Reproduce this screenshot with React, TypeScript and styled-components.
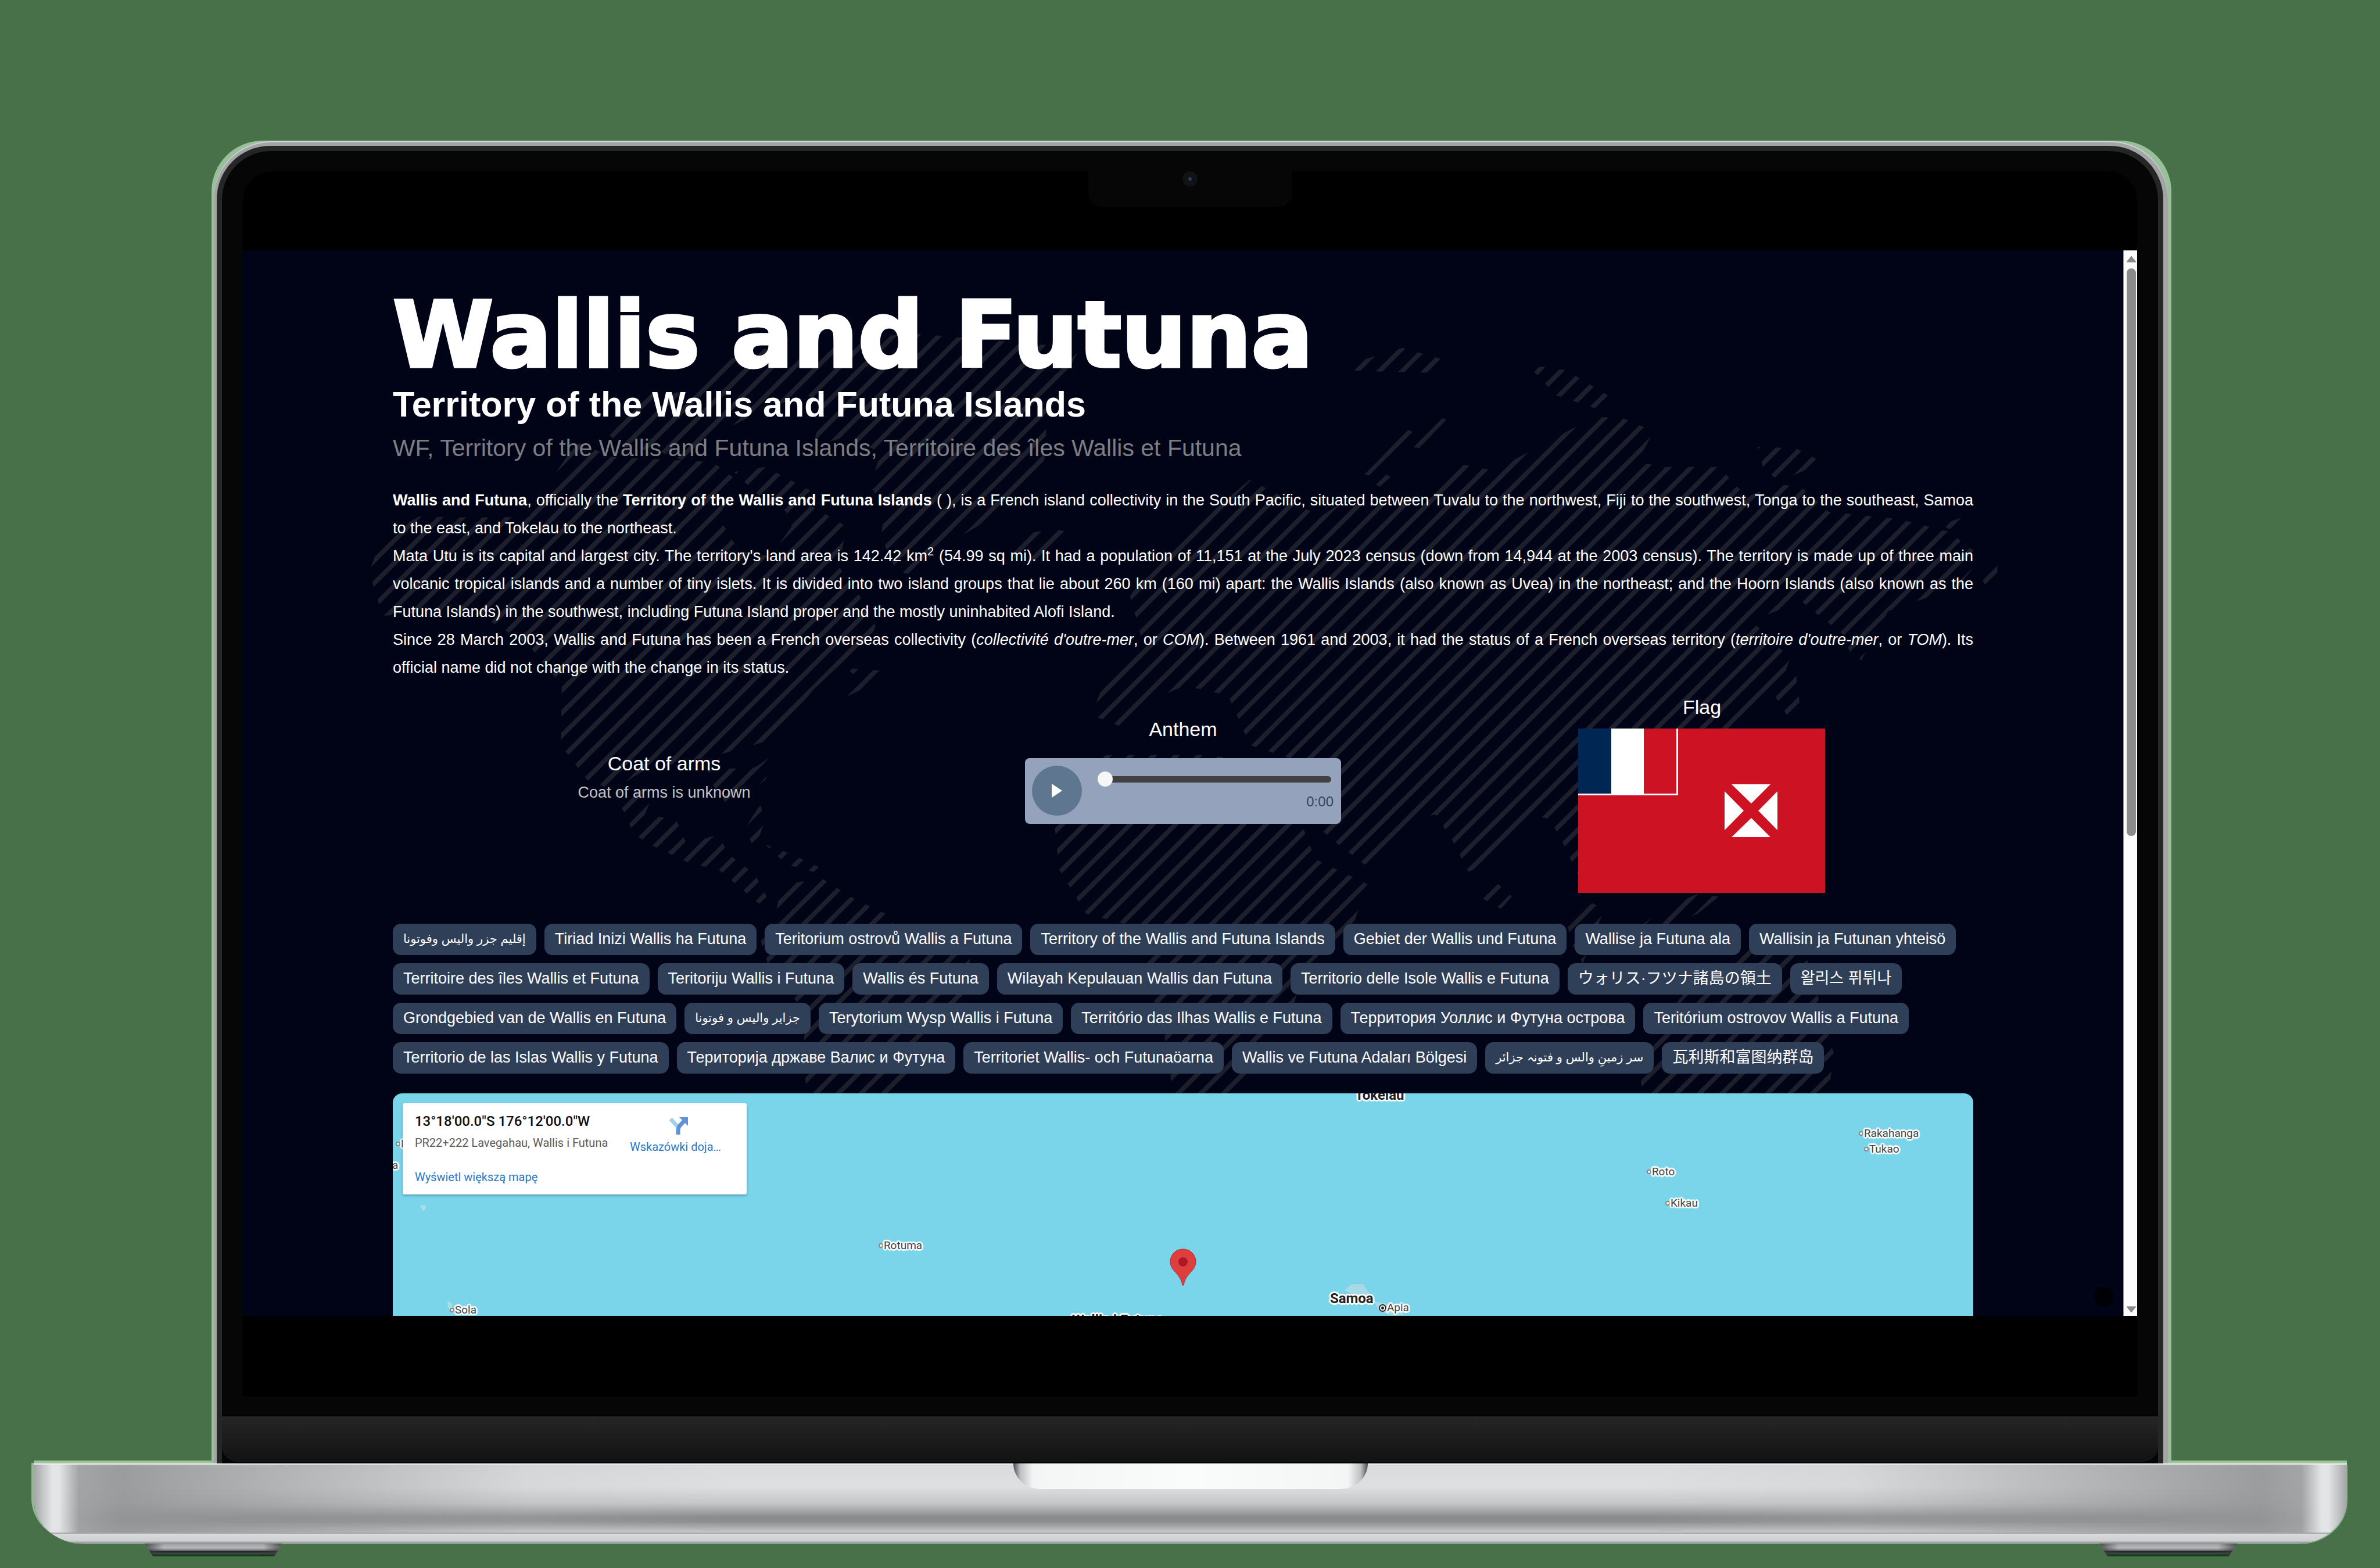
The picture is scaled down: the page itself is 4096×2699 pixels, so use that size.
import React from "react";
import styled, { createGlobalStyle, css } from "styled-components";

const sans = `"Liberation Sans", Arial, "DejaVu Sans", "Noto Sans CJK JP", "Noto Sans CJK KR", sans-serif`;
const mapFont = `Roboto, "Noto Sans", sans-serif`;

const GlobalStyle = createGlobalStyle`
  *, *::before, *::after { box-sizing: border-box; }
  html, body { margin: 0; padding: 0; background: #48714a; }
  h1, h2, h3, p, ul { margin: 0; padding: 0; }
  button { border: 0; padding: 0; background: none; cursor: pointer; }
`;

/* ---------- laptop ---------- */

const Stage = styled.div`
  height: 100vh;
  display: flex;
  flex-direction: column;
  padding: 242px 0 20px;
  overflow: hidden;
  background: #48714a;
`;

const LidEdge = styled.div`
  flex: 1;
  min-height: 0;
  display: flex;
  position: relative;
  z-index: 1;
  margin: 0 359px 0 364px;
  padding: 1px 6px 0 4px;
  background: #98c09a;
  border-radius: 88px 88px 0 0;
`;

const LidMetal = styled.div`
  flex: 1;
  display: flex;
  padding: 8px 8px 0 5px;
  border-radius: 98px 98px 0 0;
  background: #a3a4a6;
  box-shadow: inset 0 2px 0 #d2d3d5;
`;

const LidRim = styled.div`
  flex: 1;
  display: flex;
  padding: 9px 9px 0;
  border-radius: 92px 92px 0 0;
  background: #252626;
`;

const Bezel = styled.div`
  flex: 1;
  min-width: 0;
  display: flex;
  flex-direction: column;
  background: #060606;
  border-radius: 84px 84px 0 0;
`;

const Screen = styled.div`
  flex: 1;
  min-height: 0;
  display: flex;
  flex-direction: column;
  margin: 35px 36px 34px;
  background: #000;
  border-radius: 50px 50px 0 0;
`;

const TopBar = styled.div`
  height: 136px;
  display: flex;
  justify-content: center;
  align-items: flex-start;
`;

const Notch = styled.div`
  width: 351px;
  height: 61px;
  display: flex;
  justify-content: center;
  background: #060606;
  border-radius: 0 0 24px 24px;
`;

const Camera = styled.div`
  width: 26px;
  height: 26px;
  border-radius: 50%;
  background: radial-gradient(circle, #2c3f6e 0 2px, #111213 4px 100%);
`;

const BottomBar = styled.div`
  height: 139px;
`;

const Hinge = styled.div`
  height: 81px;
  border-radius: 0 0 28px 28px;
  background: linear-gradient(#262626, #1c1c1c 50%, #121212);
  border-bottom: 2px solid #000;
`;

const Base = styled.div`
  height: 138px;
  margin: 0 57px 0 58px;
  display: flex;
  justify-content: center;
  align-items: flex-start;
  border-radius: 0 0 84px 84px / 0 0 76px 76px;
  box-shadow: 0 -5px 0 #9cc49e, -5px -2px 0 -1px #8fba91, 2px 2px 0 -1px #8fba91;
  background:
    linear-gradient(#f1f1f2 0 2px, transparent 2px 119px, #a6a7a8 119px 121px, #d9dadc 121px, #cfd0d2 133px, #949596 137px),
    linear-gradient(90deg, #a3a4a6 0, #c9cacc 18px, #e3e4e6 32px, #e3e4e6 44px, rgba(160, 161, 163, 0.95) 78px, rgba(148, 149, 151, 0.9) 150px, rgba(150, 151, 153, 0.6) 420px, rgba(190, 191, 193, 0.2) 850px, transparent 1200px, transparent calc(100% - 1200px), rgba(190, 191, 193, 0.2) calc(100% - 850px), rgba(150, 151, 153, 0.6) calc(100% - 420px), rgba(148, 149, 151, 0.9) calc(100% - 150px), rgba(160, 161, 163, 0.95) calc(100% - 78px), #e3e4e6 calc(100% - 44px), #e3e4e6 calc(100% - 32px), #c9cacc calc(100% - 18px), #a3a4a6 100%),
    linear-gradient(#dadbdd 0, #dedfe0 40px, #c6c7c8 68px, #8a8b8d 92px, #8c8d8f 100px, #c8c9cb 119px, #d0d1d3 138px);
`;

const Thumb = styled.div`
  width: 610px;
  height: 44px;
  border-radius: 0 0 46px 46px / 0 0 44px 44px;
  background: linear-gradient(90deg, #4c4d52 0, #bfc0c2 12px, #f4f5f5 34px, #fafbfb 50%, #f4f5f5 calc(100% - 34px), #bfc0c2 calc(100% - 12px), #4c4d52 100%);
`;

const Feet = styled.div`
  height: 22px;
  display: flex;
  justify-content: space-between;
  padding: 0 246px 0 249px;
`;

const Foot = styled.div`
  width: 237px;
  clip-path: polygon(0 0, 100% 0, 94% 100%, 6% 100%);
  background:
    linear-gradient(90deg, rgba(60, 60, 62, 0.8), transparent 14%, transparent 86%, rgba(60, 60, 62, 0.8)),
    linear-gradient(#9b9c9f 0, #b9babd 7px, #77787b 12px, #202124 13px, #4a4b50 18px, #0b3b10 19px, #0b3b10 22px);
`;

/* ---------- browser page ---------- */

const Viewport = styled.div`
  flex: 1;
  min-height: 0;
  display: flex;
  overflow: hidden;
`;

const Page = styled.main`
  flex: 1;
  min-width: 0;
  position: relative;
  overflow: hidden;
  background: #010416;
  color: #fff;
  font-family: ${sans};
  padding-top: 64px;
`;

const WorldPattern = styled.svg`
  position: absolute;
  inset: 0;
  width: 100%;
  height: 100%;
`;

const Content = styled.div`
  position: relative;
  width: 84.06%;
  margin: 0 auto;
`;

const Title = styled.h1`
  font-family: "DejaVu Sans", ${sans};
  font-weight: 700;
  font-size: 157px;
  line-height: 163px;
  -webkit-text-stroke: 5px #fff;
`;

const Subtitle = styled.h2`
  margin-top: 4px;
  font-size: 61px;
  line-height: 68px;
`;

const AltNames = styled.p`
  margin-top: 14px;
  font-size: 41px;
  line-height: 54px;
  color: #7d7e83;
`;

const Article = styled.div`
  margin-top: 39px;
  font-size: 27px;
  line-height: 48px;
  text-align: justify;
  sup { line-height: 0; font-size: 20px; }
`;

const Symbols = styled.section`
  margin-top: 20px;
  display: flex;
  justify-content: center;
  align-items: center;
  gap: 468px;
`;

const Symbol = styled.div<{ $gap: number; $lift?: number }>`
  flex: 0 0 425px;
  display: flex;
  flex-direction: column;
  align-items: center;
  gap: ${(p) => p.$gap}px;
  padding-bottom: ${(p) => p.$lift ?? 0}px;
`;

const SymbolTitle = styled.h3`
  font-size: 34px;
  font-weight: 400;
  line-height: 48px;
`;

const Muted = styled.p`
  font-size: 27px;
  line-height: 48px;
  color: #c3c4c8;
`;

const Player = styled.div`
  width: 544px;
  height: 113px;
  margin: 0 -60px;
  display: flex;
  align-items: center;
  gap: 27px;
  padding: 0 13px 0 12px;
  border-radius: 8px;
  background: #94a3bb;
`;

const PlayButton = styled.button`
  flex: 0 0 86px;
  height: 86px;
  border-radius: 50%;
  background: #5e7690;
  display: flex;
  align-items: center;
  justify-content: center;
`;

const Timeline = styled.div`
  flex: 1;
  min-width: 0;
  display: flex;
  flex-direction: column;
  gap: 12px;
`;

const Seek = styled.input`
  appearance: none;
  width: calc(100% - 4px);
  height: 26px;
  margin: 0;
  background: transparent;
  &::-webkit-slider-runnable-track {
    height: 11px;
    border-radius: 6px;
    background: #434043;
  }
  &::-webkit-slider-thumb {
    appearance: none;
    width: 26px;
    height: 26px;
    margin-top: -8px;
    border-radius: 50%;
    background: #f6f6f6;
  }
`;

const Time = styled.span`
  align-self: flex-end;
  font-size: 24px;
  line-height: 28px;
  color: #38455a;
`;

const Flag = styled.svg`
  display: block;
  width: 425px;
  height: 283px;
`;

const Tags = styled.ul`
  margin-top: 53px;
  display: flex;
  flex-wrap: wrap;
  gap: 14px;
  list-style: none;
`;

const Tag = styled.li<{ $arabic: boolean }>`
  height: 54px;
  padding: 0 18px;
  border-radius: 14px;
  background: #2f3f58;
  font-size: ${(p) => (p.$arabic ? 21 : 27)}px;
  line-height: 52px;
  white-space: nowrap;
`;

/* ---------- map ---------- */

const Map = styled.section`
  position: relative;
  height: 760px;
  margin-top: 34px;
  border-radius: 16px;
  overflow: hidden;
  background: #7ad5ea;
  font-family: ${mapFont};
`;

const halo = css`
  text-shadow: -2px -2px 1px #fff, 2px -2px 1px #fff, -2px 2px 1px #fff, 2px 2px 1px #fff, 0 3px 1px #fff, 0 -3px 1px #fff, 3px 0 1px #fff, -3px 0 1px #fff;
`;

const Place = styled.span<{ $x: number; $y: number; $major?: boolean }>`
  position: absolute;
  left: ${(p) => p.$x}px;
  top: ${(p) => p.$y}px;
  display: flex;
  align-items: center;
  gap: 1px;
  white-space: nowrap;
  color: ${(p) => (p.$major ? "#222" : "#444")};
  font-size: ${(p) => (p.$major ? 24 : 19)}px;
  font-weight: ${(p) => (p.$major ? 700 : 400)};
  line-height: 28px;
  ${halo}
`;

const Dot = styled.i<{ $capital?: boolean }>`
  width: ${(p) => (p.$capital ? 13 : 8)}px;
  height: ${(p) => (p.$capital ? 13 : 8)}px;
  border-radius: 50%;
  border: 2px solid ${(p) => (p.$capital ? "#222" : "#888")};
  background: ${(p) => (p.$capital ? "radial-gradient(#222 0 2px, #fff 3px)" : "#fff")};
`;

const MapDrawing = styled.svg<{ $x: number; $y: number }>`
  position: absolute;
  left: ${(p) => p.$x}px;
  top: ${(p) => p.$y}px;
`;

const Pin = styled.svg`
  position: absolute;
  left: calc(50% - 23px);
  top: 267px;
`;

const InfoCard = styled.div`
  position: absolute;
  left: 17px;
  top: 17px;
  width: 592px;
  height: 157px;
  padding: 16px 44px 8px 21px;
  display: flex;
  justify-content: space-between;
  background: #fff;
  border-radius: 3px;
  box-shadow: 0 2px 4px rgba(0, 40, 70, 0.35);
`;

const CardText = styled.div`
  display: flex;
  flex-direction: column;
`;

const Coordinates = styled.strong`
  font-size: 24px;
  line-height: 30px;
  font-weight: 500;
  color: #111;
`;

const Address = styled.span`
  margin-top: 7px;
  font-size: 20px;
  line-height: 30px;
  color: #5b5b5b;
`;

const MapLink = styled.a<{ $top: number }>`
  margin-top: ${(p) => p.$top}px;
  font-size: 20px;
  line-height: 30px;
  color: #2a78c8;
  text-decoration: none;
`;

const Directions = styled.div`
  display: flex;
  flex-direction: column;
  align-items: center;
  padding-top: 8px;
`;

const FloatingDot = styled.button`
  position: absolute;
  right: 16px;
  bottom: 16px;
  width: 34px;
  height: 34px;
  border-radius: 50%;
  background: #000007;
`;

/* ---------- scrollbar ---------- */

const Scrollbar = styled.div`
  width: 24px;
  display: flex;
  flex-direction: column;
  align-items: center;
  padding: 9px 0 5px 2px;
  background: #fcfcfc;
  border-left: 1px solid #8a8c94;
`;

const Arrow = styled.button`
  height: 12px;
  display: flex;
`;

const Track = styled.div`
  flex: 1;
  margin: 10px 0;
`;

const ScrollThumb = styled.div`
  width: 16px;
  height: 55%;
  border-radius: 8px;
  background: #8b8b8b;
`;

/* Continents, in page coordinates, cut out of a field of diagonal lines. */
const west = "matrix(0.9028 0 0 0.8547 604 547.4)";
const east = "matrix(0.939 0 0 0.8547 2019.7 547.4)";

const westShapes = [
  "35,510 60,440 130,400 245,402 340,400 395,305 430,250 500,280 600,285 690,290 740,330 700,400 740,470 800,480 840,420 820,360 880,380 945,420 930,500 970,560 1000,620 985,670 930,700 880,750 850,790 800,850 700,880 560,910 500,950 450,930 400,860 402,740 340,660 250,600 150,590 60,600",
  "480,225 560,150 630,150 700,92 780,60 860,80 900,110 850,160 800,180 760,200 700,230 640,290 590,270 520,260",
  "830,120 900,60 1060,30 1390,60 1370,100 1330,150 1320,310 1240,390 1130,460 1080,520 1040,510 1010,440 1020,380 990,340 1010,270 940,240 880,260 900,180",
  "730,310 790,300 880,350 850,400 790,370",
  "910,780 960,720 945,705 1010,710 1025,720 1000,735",
  "680,910 770,905 820,870 790,930 720,985 690,940",
  "500,950 580,950 560,1000 620,1010 640,1060 700,1040 720,1080 770,1120 800,1180 790,1190 700,1110 650,1100 570,1060 540,1040",
  "750,1030 780,980 790,1010 770,1070",
  "790,1060 840,1080 900,1110 880,1115 830,1100",
  "820,1140 900,1130 960,1170 1020,1200 1050,1240 1180,1290 1175,1350 1130,1420 1080,1500 1040,1568 870,1568 860,1480 870,1400 800,1320 780,1250 810,1200",
  "1270,450 1280,435 1340,425 1375,432 1330,480 1260,500",
];

const eastShapes = [
  "-150,800 -120,710 -60,640 -80,560 -20,470 40,420 140,325 190,355 270,400 310,370 350,380 480,350 530,295 600,310 625,285 770,200 820,200 880,228 850,290 900,300 1000,300 1050,360 1110,335 1150,340 1200,390 1330,405 1420,430 1480,480 1440,540 1350,575 1310,590 1260,690 1230,640 1150,570 1060,610 1130,685 1110,750 1050,800 1010,860 960,940 860,1000 800,1120 740,1120 715,1060 690,1010 660,1000 610,1050 580,1100 540,1115 510,1050 480,1000 440,1010 400,1070 355,1105 290,1050 240,1000 250,900 140,860 100,760 20,740 -40,770 -80,830",
  "-219,1010 -150,880 60,880 200,900 235,1020 260,1090 355,1140 330,1220 240,1310 210,1420 160,1480 120,1568 0,1568 -20,1420 -60,1300 -90,1220 -160,1200 -210,1110",
  "350,315 430,225 440,230 365,318",
  "440,260 490,200 500,205 450,262",
  "370,335 390,315 398,320 378,340",
  "300,105 345,85 420,60 490,82 470,110 385,108",
  "650,95 720,105 810,165 795,190 700,155",
  "1070,260 1140,262 1180,285 1160,305 1110,330 1080,300",
  "1410,415 1450,400 1465,410 1420,425",
  "1480,520 1510,485 1510,540 1490,545",
  "1210,580 1290,600 1245,690",
  "1090,740 1140,710 1150,800 1130,810",
  "560,1165 595,1140 620,1165 600,1190",
  "720,1215 760,1175 790,1190 750,1300 730,1260",
  "855,1225 905,1185 960,1160 1000,1165 960,1200 900,1230",
  "860,1568 850,1480 950,1340 1060,1270 1150,1250 1190,1400 1210,1480 1200,1568",
];

const lineSums = Array.from({ length: 140 }, (_, i) => 790 + i * 39);

function World() {
  return (
    <WorldPattern viewBox="418 431 3236 1834" preserveAspectRatio="xMidYMin slice" aria-hidden="true">
      <defs>
        <clipPath id="land">
          {westShapes.map((s) => (
            <polygon key={s} points={s} transform={west} />
          ))}
          {eastShapes.map((s) => (
            <polygon key={s} points={s} transform={east} />
          ))}
        </clipPath>
      </defs>
      <g clipPath="url(#land)" stroke="#1e1f2c" strokeWidth="8">
        {lineSums.map((sum) => (
          <line key={sum} x1={sum - 400} y1={400} x2={sum - 2300} y2={2300} />
        ))}
      </g>
    </WorldPattern>
  );
}

const tags = [
  "إقليم جزر واليس وفوتونا",
  "Tiriad Inizi Wallis ha Futuna",
  "Teritorium ostrovů Wallis a Futuna",
  "Territory of the Wallis and Futuna Islands",
  "Gebiet der Wallis und Futuna",
  "Wallise ja Futuna ala",
  "Wallisin ja Futunan yhteisö",
  "Territoire des îles Wallis et Futuna",
  "Teritoriju Wallis i Futuna",
  "Wallis és Futuna",
  "Wilayah Kepulauan Wallis dan Futuna",
  "Territorio delle Isole Wallis e Futuna",
  "ウォリス·フツナ諸島の領土",
  "왈리스 퓌튀나",
  "Grondgebied van de Wallis en Futuna",
  "جزایر والیس و فوتونا",
  "Terytorium Wysp Wallis i Futuna",
  "Território das Ilhas Wallis e Futuna",
  "Территория Уоллис и Футуна острова",
  "Teritórium ostrovov Wallis a Futuna",
  "Territorio de las Islas Wallis y Futuna",
  "Територија државе Валис и Футуна",
  "Territoriet Wallis- och Futunaöarna",
  "Wallis ve Futuna Adaları Bölgesi",
  "سر زمینِ والس و فتونہ جزائر",
  "瓦利斯和富图纳群岛",
];

const isArabic = (text: string) => /[\u0600-\u06FF]/.test(text);

const places = [
  { name: "Rakahanga", x: 2523, y: 55 },
  { name: "Tukao", x: 2532, y: 82 },
  { name: "Roto", x: 2158, y: 121 },
  { name: "Kikau", x: 2190, y: 175 },
  { name: "Rotuma", x: 836, y: 248 },
  { name: "Sola", x: 98, y: 359 },
  { name: "Labasa", x: 5, y: 73 },
];

export default function App() {
  return (
    <>
      <GlobalStyle />
      <Stage>
        <LidEdge>
          <LidMetal>
            <LidRim>
              <Bezel>
                <Screen>
                  <TopBar>
                    <Notch>
                      <Camera />
                    </Notch>
                  </TopBar>
                  <Viewport>
                    <Page>
                      <World />
                      <Content>
                        <Title>Wallis and Futuna</Title>
                        <Subtitle>Territory of the Wallis and Futuna Islands</Subtitle>
                        <AltNames>WF, Territory of the Wallis and Futuna Islands, Territoire des îles Wallis et Futuna</AltNames>
                        <Article>
                          <p>
                            <b>Wallis and Futuna</b>, officially the <b>Territory of the Wallis and Futuna Islands</b> ( ), is a French island collectivity in the South Pacific, situated between Tuvalu to the northwest, Fiji to the southwest, Tonga to the southeast, Samoa to the east, and Tokelau to the northeast.
                          </p>
                          <p>
                            Mata Utu is its capital and largest city. The territory's land area is 142.42 km<sup>2</sup> (54.99 sq mi). It had a population of 11,151 at the July 2023 census (down from 14,944 at the 2003 census). The territory is made up of three main volcanic tropical islands and a number of tiny islets. It is divided into two island groups that lie about 260 km (160 mi) apart: the Wallis Islands (also known as Uvea) in the northeast; and the Hoorn Islands (also known as the Futuna Islands) in the southwest, including Futuna Island proper and the mostly uninhabited Alofi Island.
                          </p>
                          <p>
                            Since 28 March 2003, Wallis and Futuna has been a French overseas collectivity (<i>collectivité d'outre-mer</i>, or <i>COM</i>). Between 1961 and 2003, it had the status of a French overseas territory (<i>territoire d'outre-mer</i>, or <i>TOM</i>). Its official name did not change with the change in its status.
                          </p>
                        </Article>
                        <Symbols>
                          <Symbol $gap={2} $lift={52}>
                            <SymbolTitle>Coat of arms</SymbolTitle>
                            <Muted>Coat of arms is unknown</Muted>
                          </Symbol>
                          <Symbol $gap={26} $lift={82}>
                            <SymbolTitle>Anthem</SymbolTitle>
                            <Player>
                              <PlayButton aria-label="Play">
                                <svg width="20" height="26" viewBox="0 0 20 26">
                                  <path d="M1 1L19 13L1 25Z" fill="#fff" />
                                </svg>
                              </PlayButton>
                              <Timeline>
                                <Seek type="range" min={0} max={100} defaultValue={0} aria-label="Seek" />
                                <Time>0:00</Time>
                              </Timeline>
                            </Player>
                          </Symbol>
                          <Symbol $gap={13}>
                            <SymbolTitle>Flag</SymbolTitle>
                            <Flag viewBox="0 0 425 283" role="img" aria-label="Flag of Wallis and Futuna">
                              <rect width="425" height="283" fill="#cd1224" />
                              <rect width="172" height="115" fill="#fff" />
                              <rect width="57" height="112" fill="#002654" />
                              <rect x="113" width="56" height="112" fill="#cd1224" />
                              <g fill="#fff">
                                <path d="M264 96H331L298 129Z" />
                                <path d="M264 187H331L298 154Z" />
                                <path d="M252 108V175L285 141.500Z" />
                                <path d="M343 108V175L310 141.500Z" />
                              </g>
                            </Flag>
                          </Symbol>
                        </Symbols>
                        <Tags>
                          {tags.map((t) => (
                            <Tag key={t} $arabic={isArabic(t)}>{t}</Tag>
                          ))}
                        </Tags>
                        <Map aria-label="Map">
                          <MapDrawing $x={40} $y={190} width="24" height="20" viewBox="0 0 24 20">
                            <path d="M7 3L16 2L17 8L12 13Z" fill="#a5dfe8" />
                          </MapDrawing>
                          <MapDrawing $x={86} $y={355} width="24" height="30" viewBox="0 0 24 30">
                            <path d="M8 2L15 6L18 22L9 14Z" fill="#a5dfe8" />
                          </MapDrawing>
                          <MapDrawing $x={1620} $y={325} width="180" height="60" viewBox="0 0 180 60">
                            <path d="M16 14L30 3L50 2L62 20L40 26Z" fill="#a5dbe9" stroke="#8cc3dc" />
                            <path d="M66 32L90 36L112 48L124 58L92 56L76 48Z" fill="#a5dbe9" stroke="#8cc3dc" />
                          </MapDrawing>
                          {places.map((p) => (
                            <Place key={p.name} $x={p.x} $y={p.y}>
                              <Dot />
                              {p.name}
                            </Place>
                          ))}
                          <Place $x={1697} $y={355}>
                            <Dot $capital />
                            Apia
                          </Place>
                          <Place $x={-1} $y={110}>a</Place>
                          <Place $major $x={1613} $y={339}>Samoa</Place>
                          <Place $major $x={1656} $y={-11}>Tokelau</Place>
                          <Place $major $x={1169} $y={376}>Wallis i Futuna</Place>
                          <Pin width="46" height="65" viewBox="0 0 46 65" aria-hidden="true">
                            <path d="M23 1C10 1 1 11 1 23C1 39 19 43 22 63Q23 65 24 63C27 43 45 39 45 23C45 11 36 1 23 1Z" fill="#de3e3c" stroke="#b5302f" />
                            <circle cx="23" cy="23" r="8" fill="#af1726" />
                          </Pin>
                          <InfoCard>
                            <CardText>
                              <Coordinates>13°18'00.0"S 176°12'00.0"W</Coordinates>
                              <Address>PR22+222 Lavegahau, Wallis i Futuna</Address>
                              <MapLink href="#map" $top={29}>Wyświetl większą mapę</MapLink>
                            </CardText>
                            <Directions>
                              <svg width="44" height="30" viewBox="-12 0 44 30" aria-hidden="true">
                                <path d="M2 3L14 16" stroke="#a3d1ee" strokeWidth="7" />
                                <path d="M15 30V23C15 15 20 13 26 6" fill="none" stroke="#5f93d6" strokeWidth="7" />
                                <path d="M17 0H32V15Z" fill="#5f93d6" />
                              </svg>
                              <MapLink href="#directions" $top={6}>Wskazówki doja…</MapLink>
                            </Directions>
                          </InfoCard>
                        </Map>
                      </Content>
                      <FloatingDot aria-label="Back to top" />
                    </Page>
                    <Scrollbar>
                      <Arrow aria-label="Scroll up">
                        <svg width="18" height="12" viewBox="0 0 18 12">
                          <path d="M9 1L17 11H1Z" fill="#8b8b8b" stroke="#8b8b8b" strokeLinejoin="round" />
                        </svg>
                      </Arrow>
                      <Track>
                        <ScrollThumb />
                      </Track>
                      <Arrow aria-label="Scroll down">
                        <svg width="18" height="12" viewBox="0 0 18 12">
                          <path d="M9 11L17 1H1Z" fill="#8b8b8b" stroke="#8b8b8b" strokeLinejoin="round" />
                        </svg>
                      </Arrow>
                    </Scrollbar>
                  </Viewport>
                  <BottomBar />
                </Screen>
                <Hinge />
              </Bezel>
            </LidRim>
          </LidMetal>
        </LidEdge>
        <Base>
          <Thumb />
        </Base>
        <Feet>
          <Foot />
          <Foot />
        </Feet>
      </Stage>
    </>
  );
}
